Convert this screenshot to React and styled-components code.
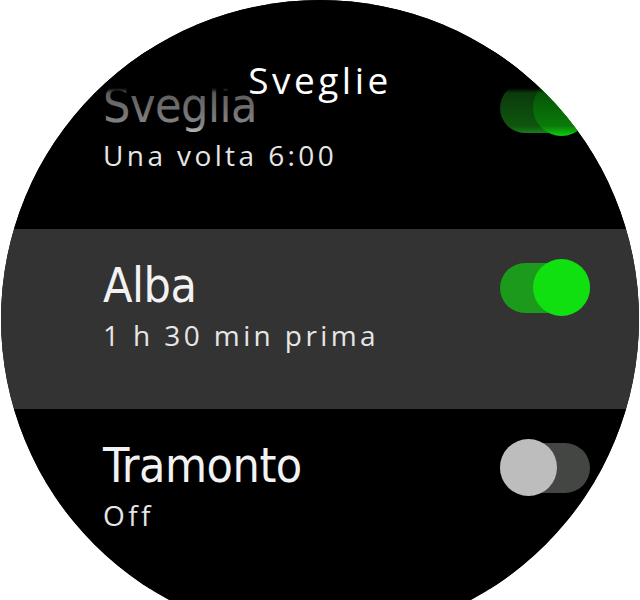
import React from 'react';
import styled, { createGlobalStyle } from "styled-components";

const GlobalStyle = createGlobalStyle`
    html, body {
        margin: 0;
        padding: 0;
        background: #ffffff;
        overflow: hidden;
    }
`

const Page = styled.div`
    width: 640px;
    height: 600px;
    display: flex;
    justify-content: center;
    overflow: hidden;
    background: #ffffff;
`

const Screen = styled.div`
    position: relative;
    flex-shrink: 0;
    width: 638px;
    height: 638px;
    border-radius: 50%;
    background: #000000;
    overflow: hidden;
    padding-top: 49px;
    box-sizing: border-box;
`

// header floats over the list and fades the top row out
const Header = styled.div`
    position: absolute;
    top: 0;
    left: 0;
    right: 0;
    height: 140px;
    display: flex;
    justify-content: center;
    padding-top: 59px;
    box-sizing: border-box;
    background: linear-gradient(to bottom, #000 0px, #000 88px, rgba(0,0,0,0.62) 93px, rgba(0,0,0,0.45) 126px, rgba(0,0,0,0) 138px);
    z-index: 2;
`

const HeaderTitle = styled.span`
    font-family: 'Open Sans', 'Noto Sans', sans-serif;
    font-size: 37px;
    line-height: 42px;
    letter-spacing: 3.5px;
    color: #ffffff;
`

const List = styled.div`
    display: flex;
    flex-direction: column;
`

const Row = styled.div`
    height: 180px;
    display: flex;
    align-items: flex-start;
    justify-content: space-between;
    padding: 0 49px 0 102px;
    box-sizing: border-box;
    background: ${p => p.$active ? "#333333" : "#000000"};
`

const Texts = styled.div`
    display: flex;
    flex-direction: column;
    padding-top: 28px;
`

const Title = styled.div`
    font-family: 'DejaVu Sans Condensed', 'DejaVu Sans', sans-serif;
    font-stretch: condensed;
    font-size: 48px;
    line-height: 56px;
    letter-spacing: -0.5px;
    color: #f2f2f2;
`

const Sub = styled.div`
    font-family: 'Open Sans', 'Noto Sans', sans-serif;
    font-size: 28px;
    line-height: 36px;
    letter-spacing: 3.4px;
    color: #e6e6e6;
    margin-top: 4px;
`

const ToggleBox = styled.div`
    position: relative;
    width: 90px;
    height: 58px;
    margin-top: 30px;
    flex-shrink: 0;
`

const Track = styled.div`
    position: absolute;
    left: 0;
    right: 0;
    top: 4px;
    height: 50px;
    border-radius: 25px;
    background: ${p => p.$on ? "#1c9a1c" : "#434643"};
`

const Knob = styled.div`
    position: absolute;
    top: 0;
    ${p => p.$on ? "right: 0;" : "left: 0;"}
    width: 57px;
    height: 57px;
    border-radius: 50%;
    background: ${p => p.$on ? "#10e010" : "#bdbdbd"};
`

const alarms = [
    { title: "Sveglia", sub: "Una volta 6:00", on: true },
    { title: "Alba", sub: "1 h 30 min prima", on: true, active: true },
    { title: "Tramonto", sub: "Off", on: false },
]

function Toggle({ on }) {
    return (
        <ToggleBox>
            <Track $on={on} />
            <Knob $on={on} />
        </ToggleBox>
    )
}

function App() {
    return (
        <Page>
            <GlobalStyle />
            <Screen>
                <Header>
                    <HeaderTitle>Sveglie</HeaderTitle>
                </Header>
                <List>
                    {alarms.map(a => (
                        <Row key={a.title} $active={a.active}>
                            <Texts>
                                <Title>{a.title}</Title>
                                <Sub>{a.sub}</Sub>
                            </Texts>
                            <Toggle on={a.on} />
                        </Row>
                    ))}
                </List>
            </Screen>
        </Page>
    )
}

export default App;
